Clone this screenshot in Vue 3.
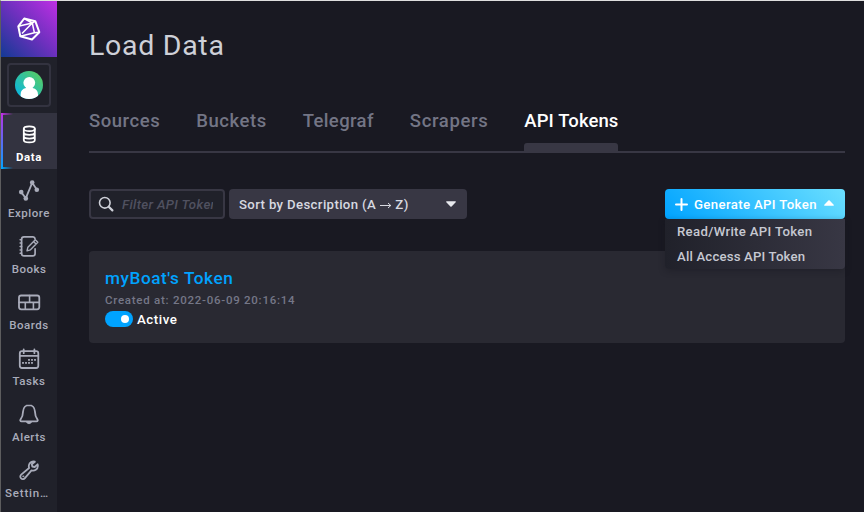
<script setup>
const nav = [
  { id: 'data', label: 'Data', active: true },
  { id: 'explore', label: 'Explore' },
  { id: 'books', label: 'Books' },
  { id: 'boards', label: 'Boards' },
  { id: 'tasks', label: 'Tasks' },
  { id: 'alerts', label: 'Alerts' },
  { id: 'settings', label: 'Settin…' },
]
const tabs = [
  { id: 'sources', label: 'Sources' },
  { id: 'buckets', label: 'Buckets' },
  { id: 'telegraf', label: 'Telegraf' },
  { id: 'scrapers', label: 'Scrapers' },
  { id: 'tokens', label: 'API Tokens', active: true },
]
const dots = [[12, 12], [15, 12], [18, 12], [6, 15], [9, 15], [12, 15], [15, 15]]
</script>

<template>
  <div class="app">
    <nav class="sidebar">
      <div class="logo">
        <svg width="24" height="24" viewBox="0 0 24 24" fill="none" stroke="#fff" stroke-width="2" stroke-linejoin="round">
          <path d="M7.200 1.500 18.300 4.200 22.300 15.200 15 22.500 3.300 19.200 1.300 9.300Z" />
          <path d="M7.200 1.500 15.300 6 18.300 4.200M15.300 6 17.400 15.800 22.300 15.200M17.400 15.800 3.300 19.200M15.300 6 1.300 9.300M15.300 6 5 16.500" stroke-width="1.500" />
        </svg>
      </div>
      <div class="user">
        <svg width="28" height="28" viewBox="0 0 28 28">
          <defs>
            <linearGradient id="avatar" x1="0" y1="1" x2="1" y2="0">
              <stop offset="0" stop-color="#00b4f0" />
              <stop offset="1" stop-color="#60cf55" />
            </linearGradient>
            <clipPath id="round"><circle cx="14" cy="14" r="14" /></clipPath>
          </defs>
          <circle cx="14" cy="14" r="14" fill="url(#avatar)" />
          <g clip-path="url(#round)" fill="#fff">
            <circle cx="14.3" cy="11.8" r="5.900" />
            <path d="M11 15h6.600v2c3.500.8 5.400 3 5.400 6.500V29H5.600v-5.500c0-3.500 1.900-5.700 5.400-6.500Z" />
          </g>
        </svg>
      </div>
      <div v-for="item in nav" :key="item.id" class="nav-item" :class="[item.id, { active: item.active }]">
        <svg width="24" height="24" viewBox="0 0 24 24" fill="none" stroke="currentColor" stroke-width="1.8" stroke-linecap="round" stroke-linejoin="round">
          <template v-if="item.id === 'data'">
            <ellipse cx="12.300" cy="6.800" rx="5.500" ry="2.400" />
            <path d="M6.800 6.800v11.200c0 1.300 2.500 2.400 5.500 2.400s5.500-1.100 5.500-2.400V6.800M6.800 10.500c0 1.300 2.500 2.300 5.500 2.300s5.500-1 5.500-2.300M6.800 14.300c0 1.300 2.500 2.300 5.500 2.300s5.500-1 5.500-2.300" />
          </template>
          <template v-else-if="item.id === 'explore'">
            <path d="M4.200 14.100 8.800 20.200 15.200 4.800 19.800 11.600" />
            <g fill="currentColor" stroke="none">
              <circle cx="4.200" cy="14.100" r="2.300" /><circle cx="8.800" cy="20.400" r="2.300" />
              <circle cx="15.200" cy="4.600" r="2.300" /><circle cx="19.800" cy="11.700" r="2.300" />
            </g>
          </template>
          <template v-else-if="item.id === 'books'">
            <path d="M18 4.800C17.800 3.500 17 2.800 15.800 2.800H7C5.500 2.800 4.600 3.700 4.600 5.200v14.300c0 1.500.9 2.400 2.400 2.400h8.800c1.500 0 2.300-.9 2.300-2.400v-4.700" stroke-width="1.700" />
            <path d="M10 16.900 10.900 13.200 18.300 5.800 20.800 8.300 13.500 15.800ZM16.600 7.600 19 10" stroke-width="1.400" />
            <path d="M3.100 5.700h1.500M3.100 9.100h1.500M3.100 12.500h1.500M3.100 15.900h1.500M3.100 19.300h1.500" stroke-width="1.500" />
          </template>
          <template v-else-if="item.id === 'boards'">
            <rect x="2" y="5.500" width="20.300" height="13.800" rx="2.200" />
            <path d="M2 12.400h20.300M12.600 5.500v6.900M8.300 12.400v6.900M16.400 12.400v6.900" stroke-width="1.600" />
          </template>
          <template v-else-if="item.id === 'tasks'">
            <rect x="2.800" y="5.200" width="18.500" height="16.800" rx="2.200" />
            <path d="M2.800 9.900h18.500M6.700 3.400v3.800M17.400 3.400v3.800" />
            <g fill="currentColor" stroke="none">
              <rect v-for="([x, y], i) in dots" :key="i" :x="x - .9" :y="y + 1" width="1.800" height="1.800" />
            </g>
          </template>
          <template v-else-if="item.id === 'alerts'">
            <path d="M12 3.200c-3.300 0-5.700 2.500-5.900 6.100-.1 3.500-.8 6-2.500 8-.8 1-.3 2.100.9 2.100h15c1.200 0 1.700-1.100.9-2.100-1.700-2-2.400-4.500-2.500-8C17.700 5.700 15.300 3.200 12 3.200Z" />
            <path d="M9.500 19.900c.4 1.200 1.300 1.700 2.500 1.700s2.100-.5 2.500-1.700Z" fill="currentColor" stroke-width="1" />
          </template>
          <template v-else>
            <path d="M17.900 3.700c-2.600-.8-5.400.8-6 3.400-.2 1-.1 2 .2 2.900L4.200 16.600c-1.200 1.100-1.200 2.700-.1 3.800s2.800 1 3.800-.2l6.600-7.800c3.100 1.100 6.300-1.200 6.400-4.400 0-.6-.1-1.200-.3-1.700L17.700 9l-2.400-.5-.5-2.300Z" />
            <circle cx="6.200" cy="18.300" r=".6" fill="currentColor" stroke-width=".6" />
          </template>
        </svg>
        <span>{{ item.label }}</span>
      </div>
    </nav>

    <main class="page">
      <h1>Load Data</h1>
      <div class="tabs">
        <div v-for="tab in tabs" :key="tab.id" class="tab" :class="[tab.id, { active: tab.active }]"><span>{{ tab.label }}</span></div>
      </div>
      <div class="controls">
        <div class="search">
          <svg width="16" height="16" viewBox="0 0 16 16" fill="none" stroke="#ced0d8" stroke-width="1.600" stroke-linecap="round">
            <circle cx="6.800" cy="6.800" r="5.300" /><path d="m11 11 3.400 3.400" stroke-width="2.200" />
          </svg>
          <span class="placeholder">Filter API Tokens...</span>
        </div>
        <div class="sort">
          <span>Sort by Description (A <svg width="12" height="8" viewBox="0 0 12 8" fill="none" stroke="currentColor"><path d="M0 4.500h11M8 2l2.800 2.500L8 7" /></svg> Z)</span>
          <svg width="10" height="6" viewBox="0 0 10 6"><path d="M.7.300h8.600c.6 0 .8.600.4 1L5.600 5.500c-.3.300-.9.300-1.200 0L.3 1.300C-.1.900.1.300.7.300Z" fill="#e8e9ee" /></svg>
        </div>
        <div class="generate">
          <button>
            <svg width="13" height="13" viewBox="0 0 13 13" stroke="#fff" stroke-width="2" stroke-linecap="round"><path d="M6.500 1v11M1 6.500h11" /></svg>
            <span>Generate API Token</span>
            <svg class="caret" width="10" height="6" viewBox="0 0 10 6"><path d="M.7 5.700h8.600c.6 0 .8-.6.4-1L5.600.5c-.3-.3-.9-.3-1.200 0L.3 4.700c-.4.400-.2 1 .4 1Z" fill="#fff" /></svg>
          </button>
          <div class="menu">
            <div class="read-write">Read/Write API Token</div>
            <div class="all-access">All Access API Token</div>
          </div>
        </div>
      </div>
      <section class="card">
        <h2>myBoat's Token</h2>
        <p>Created at: 2022-06-09 20:16:14</p>
        <div class="status"><i class="toggle"></i><span>Active</span></div>
      </section>
    </main>
  </div>
</template>

<style>
body { margin: 0; background: #191922; overflow: hidden; }
</style>

<style scoped>
* { box-sizing: border-box; }
.app {
  display: flex; width: 864px; height: 512px; overflow: hidden;
  background: #191922; border-top: 1px solid #dedede; border-left: 1px solid #5d5d5e;
  font-family: Roboto, "Liberation Sans", sans-serif; font-weight: 500;
}
.sidebar { width: 56px; flex: none; background: #20212a; }
.logo { height: 56px; display: flex; align-items: center; justify-content: center; background: linear-gradient(45deg, #133a94, #6b30bd 50%, #be2fe4); }
.user { width: 44px; height: 44px; margin: 6px; border: 2px solid #333340; border-radius: 4px; display: flex; align-items: center; justify-content: center; }
.nav-item { height: 56px; padding-top: 9px; display: flex; flex-direction: column; align-items: center; color: #a9acba; font-size: 11.5px; letter-spacing: .5px; white-space: nowrap; }
.nav-item svg { flex: none; }
.nav-item span { line-height: 14px; margin-top: 4px; }
.nav-item.settings span { margin-left: -4px; letter-spacing: .8px; }
.nav-item.active {
  font-weight: 700; color: #fff;
  background: linear-gradient(90deg, #be2fe4, transparent) 0 0 / 12px 2px no-repeat,
    linear-gradient(90deg, #00a3ff, transparent) 0 100% / 12px 2px no-repeat,
    linear-gradient(#be2fe4, #00a3ff) 0 0 / 2px 100% no-repeat, #333340;
}
.nav-item.active span { letter-spacing: .6px; }
.page { flex: 1; padding: 26px 19px 0 32px; }
h1 { margin: 0; height: 38px; font-size: 28.5px; line-height: 38px; font-weight: 400; letter-spacing: .7px; color: #ced0d8; }
.tabs { height: 53px; margin-top: 35px; display: flex; gap: 36px; border-bottom: 2px solid #383744; }
.tab { height: 53px; padding-top: 10px; flex: none; font-size: 18.5px; line-height: 22px; letter-spacing: .54px; color: #737585; display: flex; flex-direction: column; justify-content: space-between; }
.tab.telegraf { letter-spacing: .37px; }
.tab.scrapers { letter-spacing: .63px; }
.tab.tokens { letter-spacing: .1px; }
.tab.active { color: #fff; }
.tab.active::after { content: ""; height: 10px; border-radius: 3px 3px 0 0; background: #383744; }
.controls { margin-top: 36px; height: 30px; display: flex; gap: 4px; font-size: 13.2px; letter-spacing: .36px; }
.search { width: 136px; border: 2px solid #383744; border-radius: 4px; background: #20212a; display: flex; align-items: center; padding: 0 10px 0 7px; gap: 8px; }
.search svg { flex: none; }
.placeholder { overflow: hidden; white-space: nowrap; font-style: italic; color: #505160; }
.sort { width: 238px; border-radius: 4px; background: #383744; color: #d7d9e0; display: flex; justify-content: space-between; align-items: center; padding: 0 11px 0 10px; }
.generate { position: relative; width: 180px; margin-left: auto; }
button { width: 180px; height: 30px; border: 0; border-radius: 4px; padding: 0 11px 0 10px; display: flex; align-items: center; color: #fff; background: linear-gradient(45deg, #00a3ff, #6bdfff); font: inherit; letter-spacing: inherit; }
button span { margin-left: 6px; margin-right: auto; white-space: nowrap; }
.caret { margin-bottom: 2px; }
.menu { position: absolute; top: 30px; left: 0; width: 180px; height: 50px; border-radius: 0 0 4px 4px; background: linear-gradient(90deg, #20212a, #383744); box-shadow: 0 2px 6px rgba(20, 20, 28, .35); color: #c6c8d1; }
.menu div { height: 25px; line-height: 25px; padding-left: 12px; letter-spacing: .32px; }
.menu .all-access { letter-spacing: .17px; }
.card { margin-top: 32px; height: 92px; padding: 16px 16px; border-radius: 4px; background: #292932; }
h2 { margin: 0; font-size: 17.2px; line-height: 22px; font-weight: 500; letter-spacing: .56px; color: #00a3ff; }
p { margin: 4px 0 0; font-size: 11.5px; line-height: 14px; letter-spacing: .74px; color: #757787; }
.status { margin-top: 3px; display: flex; align-items: center; gap: 4px; height: 18px; font-size: 13.3px; letter-spacing: .55px; color: #fff; }
.toggle { width: 28px; height: 16px; border-radius: 8px; background: #00a3ff; display: flex; align-items: center; justify-content: flex-end; padding-right: 4px; }
.toggle::after { content: ""; width: 8px; height: 8px; border-radius: 50%; background: #fff; }
</style>
